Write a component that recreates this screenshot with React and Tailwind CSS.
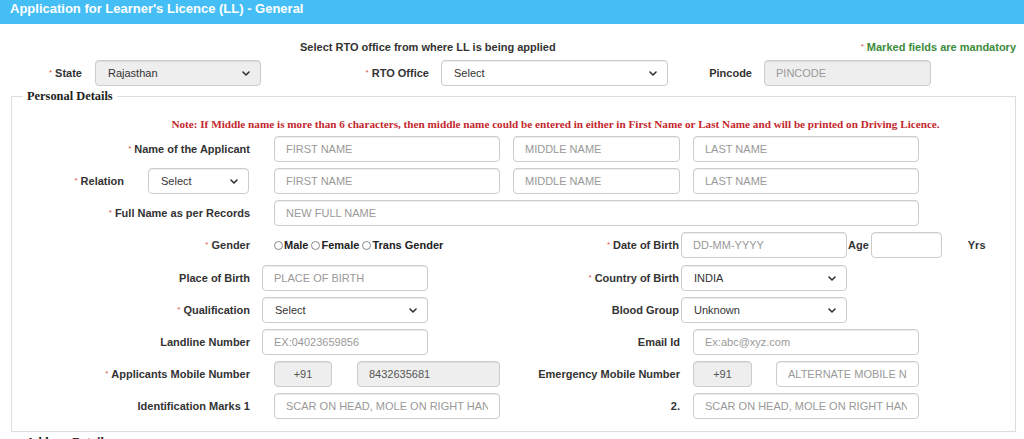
import React from "react";

const inputCls =
  "h-[26px] shrink-0 border border-[#ccc] rounded-[4px] shadow-[inset_0_1px_1px_rgba(0,0,0,0.075)] px-[11px] text-[11px] text-[#555] placeholder:text-[#999] outline-none bg-white";
const grayCls =
  "h-[26px] shrink-0 border border-[#ccc] rounded-[4px] shadow-[inset_0_1px_1px_rgba(0,0,0,0.075)] px-[11px] text-[11px] text-[#555] placeholder:text-[#999] outline-none bg-[#eee]";

function Label({ w, req, children, extra = "" }) {
  return (
    <div className={`${w} ${extra} shrink-0 whitespace-nowrap text-right font-bold text-[11px] leading-[14px] text-[#333]`}>
      {req && <span className="text-[#d9534f] text-[8px] align-top mr-[3px] font-normal">*</span>}
      {children}
    </div>
  );
}

function Inp({ cls, placeholder, value, gray }) {
  return (
    <input
      readOnly
      className={`${gray ? grayCls : inputCls} ${cls}`}
      placeholder={placeholder}
      value={value || ""}
    />
  );
}

function Chevron() {
  return (
    <svg width="8" height="5" viewBox="0 0 8 5" className="shrink-0">
      <polyline points="1,1 4,4 7,1" fill="none" stroke="#333" strokeWidth="1.6" strokeLinecap="round" strokeLinejoin="round" />
    </svg>
  );
}

function Sel({ cls, value, gray }) {
  return (
    <div
      className={`${cls} h-[26px] shrink-0 flex items-center justify-between pl-[12px] pr-[10px] border border-[#ccc] rounded-[4px] shadow-[inset_0_1px_1px_rgba(0,0,0,0.075)] text-[11px] text-[#333] ${gray ? "bg-[#eee]" : "bg-white"}`}
    >
      <span>{value}</span>
      <Chevron />
    </div>
  );
}

function Radio({ label }) {
  return (
    <span className="flex items-center shrink-0 whitespace-nowrap">
      <span className="w-[9px] h-[9px] rounded-full border border-[#888] bg-white mr-[1px] shrink-0" />
      <span className="font-bold text-[11px] text-[#222]">{label}</span>
    </span>
  );
}

export default function App() {
  return (
    <div className="w-[1024px] h-[439px] overflow-hidden bg-white font-['Liberation_Sans',Arial,sans-serif]">
      <div className="h-[24px] bg-[#45bef6] pl-[10px] pt-[1px] text-white font-bold text-[13px] leading-[15px]">
        Application for Learner's Licence (LL) - General
      </div>

      <div className="mt-[16px] flex h-[14px] items-center text-[11px] font-bold leading-[14px]">
        <div className="w-[860px] pl-[300px] text-[#333]">Select RTO office from where LL is being applied</div>
        <div className="flex-1 text-right pr-[8px] text-[#3c8b3c]">
          <span className="text-[#d9534f] text-[8px] align-top mr-[3px] font-normal">*</span>
          Marked fields are mandatory
        </div>
      </div>

      <div className="mt-[6px] flex items-center">
        <Label w="w-[82px]" req>State</Label>
        <Sel cls="ml-[13px] w-[166px]" value="Rajasthan" gray />
        <Label w="w-[168px]" req>RTO Office</Label>
        <Sel cls="ml-[12px] w-[227px]" value="Select" />
        <Label w="w-[84px]">Pincode</Label>
        <Inp cls="ml-[12px] w-[167px]" placeholder="PINCODE" gray />
      </div>

      <fieldset className="mt-[3px] ml-[11px] mr-[8px] border border-[#ddd] pb-[12px]">
        <legend className="ml-[11px] px-[4px] font-['Liberation_Serif',serif] font-bold text-[12.4px] leading-[15px] text-[#222]">
          Personal Details
        </legend>

        <div className="mt-[13px] pl-[84px] text-center font-['Liberation_Serif',serif] font-bold text-[11.2px] leading-[14px] text-[#c3282e] whitespace-nowrap">
          Note: If Middle name is more than 6 characters, then middle name could be entered in either in First Name or Last Name and will be printed on Driving Licence.
        </div>

        <div className="mt-[5px] flex items-center">
          <Label w="w-[238px]" req>Name of the Applicant</Label>
          <Inp cls="ml-[24px] w-[226px]" placeholder="FIRST NAME" />
          <Inp cls="ml-[13px] w-[167px]" placeholder="MIDDLE NAME" />
          <Inp cls="ml-[13px] w-[226px]" placeholder="LAST NAME" />
        </div>

        <div className="mt-[6px] flex items-center">
          <Label w="w-[112px]" req>Relation</Label>
          <Sel cls="ml-[24px] w-[101px]" value="Select" />
          <Inp cls="ml-[25px] w-[226px]" placeholder="FIRST NAME" />
          <Inp cls="ml-[13px] w-[167px]" placeholder="MIDDLE NAME" />
          <Inp cls="ml-[13px] w-[226px]" placeholder="LAST NAME" />
        </div>

        <div className="mt-[6px] flex items-center">
          <Label w="w-[238px]" req>Full Name as per Records</Label>
          <Inp cls="ml-[24px] w-[645px]" placeholder="NEW FULL NAME" />
        </div>

        <div className="mt-[6px] flex items-center">
          <div className="w-[430px] shrink-0 flex items-center">
            <Label w="w-[238px]" req extra="mb-[1px]">Gender</Label>
            <div className="ml-[24px] flex items-center gap-[3px] mt-[1px] shrink-0">
              <Radio label="Male" />
              <Radio label="Female" />
              <Radio label="Trans Gender" />
            </div>
          </div>
          <Label w="w-[237px]" req>Date of Birth</Label>
          <Inp cls="ml-[2px] w-[166px]" placeholder="DD-MM-YYYY" />
          <div className="ml-[1px] font-bold text-[11px] text-[#333]">Age</div>
          <Inp cls="ml-[2px] w-[71px]" />
          <div className="ml-[26px] font-bold text-[11px] text-[#333]">Yrs</div>
        </div>

        <div className="mt-[7px] flex items-center">
          <div className="w-[430px] shrink-0 flex items-center">
            <Label w="w-[238px]">Place of Birth</Label>
            <Inp cls="ml-[12px] w-[166px]" placeholder="PLACE OF BIRTH" />
          </div>
          <Label w="w-[237px]" req>Country of Birth</Label>
          <Sel cls="ml-[2px] w-[166px]" value="INDIA" />
        </div>

        <div className="mt-[6px] flex items-center">
          <div className="w-[430px] shrink-0 flex items-center">
            <Label w="w-[238px]" req>Qualification</Label>
            <Sel cls="ml-[12px] w-[166px]" value="Select" />
          </div>
          <Label w="w-[237px]">Blood Group</Label>
          <Sel cls="ml-[2px] w-[166px]" value="Unknown" />
        </div>

        <div className="mt-[6px] flex items-center">
          <div className="w-[430px] shrink-0 flex items-center">
            <Label w="w-[238px]">Landline Number</Label>
            <Inp cls="ml-[12px] w-[166px]" placeholder="EX:04023659856" />
          </div>
          <Label w="w-[238px]">Email Id</Label>
          <Inp cls="ml-[13px] w-[226px]" placeholder="Ex:abc@xyz.com" />
        </div>

        <div className="mt-[6px] flex items-center">
          <div className="w-[430px] shrink-0 flex items-center">
            <Label w="w-[238px]" req>Applicants Mobile Number</Label>
            <Inp cls="ml-[24px] w-[58px] text-center" value="+91" gray />
            <Inp cls="ml-[25px] w-[143px]" value="8432635681" gray />
          </div>
          <Label w="w-[238px]">Emergency Mobile Number</Label>
          <Inp cls="ml-[13px] w-[59px] text-center" value="+91" gray />
          <Inp cls="ml-[24px] w-[143px]" placeholder="ALTERNATE MOBILE NUMBER" />
        </div>

        <div className="mt-[6px] flex items-center">
          <div className="w-[430px] shrink-0 flex items-center">
            <Label w="w-[238px]">Identification Marks 1</Label>
            <Inp cls="ml-[24px] w-[226px]" placeholder="SCAR ON HEAD, MOLE ON RIGHT HAND" />
          </div>
          <Label w="w-[238px]">2.</Label>
          <Inp cls="ml-[13px] w-[226px]" placeholder="SCAR ON HEAD, MOLE ON RIGHT HAND" />
        </div>
      </fieldset>

      <div className="mt-[3px] ml-[26px] font-['Liberation_Serif',serif] font-bold text-[12.4px] leading-[15px] text-[#222]">
        Address Details
      </div>
    </div>
  );
}
